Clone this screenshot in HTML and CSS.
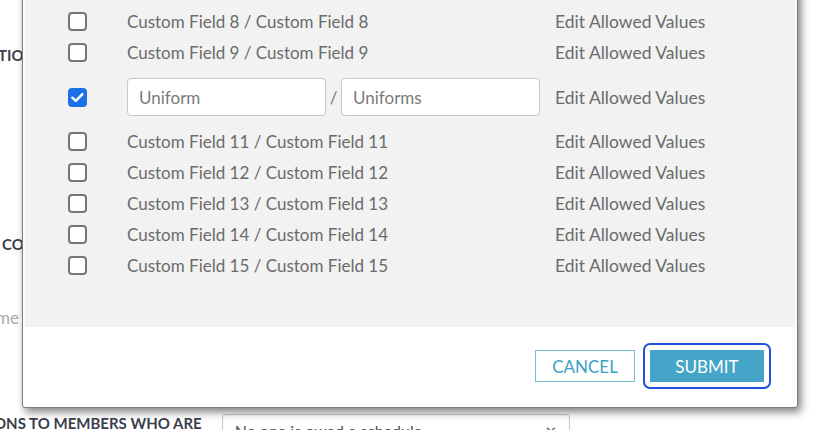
FILE: index.html
```html
<!DOCTYPE html>
<html>
<head>
<meta charset="utf-8">
<link rel="stylesheet" href="styles.css">
</head>
<body>
<div class="page">
  <div class="bg-label bg-tio">TIO</div>
  <div class="bg-label bg-co">CO</div>
  <div class="bg-hint">me</div>
  <div class="bg-row">
    <div class="bg-label bg-ons">ONS TO MEMBERS WHO ARE</div>
    <div class="bg-select"><span class="bg-select-text">No one is owed a schedule</span><span class="bg-x">×</span></div>
  </div>

  <div class="modal">
    <div class="modal-body">
      <div class="row"><span class="cb"></span><span class="lbl">Custom Field 7 / Custom Field 7</span><span class="edit">Edit Allowed Values</span></div>
      <div class="row"><span class="cb"></span><span class="lbl">Custom Field 8 / Custom Field 8</span><span class="edit">Edit Allowed Values</span></div>
      <div class="row"><span class="cb"></span><span class="lbl">Custom Field 9 / Custom Field 9</span><span class="edit">Edit Allowed Values</span></div>
      <div class="row row-edit">
        <span class="cb cb-on"><svg viewBox="0 0 20 20" width="19" height="19"><path d="M4.6 10.2 L8.2 13.6 L15.2 6.4" fill="none" stroke="#fff" stroke-width="2.6" stroke-linecap="round" stroke-linejoin="round"/></svg></span>
        <span class="lbl lbl-inputs"><span class="inp">Uniform</span><span class="slash">/</span><span class="inp">Uniforms</span></span>
        <span class="edit">Edit Allowed Values</span>
      </div>
      <div class="row"><span class="cb"></span><span class="lbl">Custom Field 11 / Custom Field 11</span><span class="edit">Edit Allowed Values</span></div>
      <div class="row"><span class="cb"></span><span class="lbl">Custom Field 12 / Custom Field 12</span><span class="edit">Edit Allowed Values</span></div>
      <div class="row"><span class="cb"></span><span class="lbl">Custom Field 13 / Custom Field 13</span><span class="edit">Edit Allowed Values</span></div>
      <div class="row"><span class="cb"></span><span class="lbl">Custom Field 14 / Custom Field 14</span><span class="edit">Edit Allowed Values</span></div>
      <div class="row"><span class="cb"></span><span class="lbl">Custom Field 15 / Custom Field 15</span><span class="edit">Edit Allowed Values</span></div>
    </div>
    <div class="modal-footer">
      <button class="btn btn-cancel">CANCEL</button>
      <span class="focus-ring"><button class="btn btn-submit">SUBMIT</button></span>
    </div>
  </div>
</div>
</body>
</html>
```
FILE: styles.css
```css
* { box-sizing: border-box; }
html, body { margin: 0; padding: 0; background: #fff; }
body { font-family: "Lato", "Noto Sans", sans-serif; overflow: hidden; }
.page { position: relative; width: 840px; height: 430px; overflow: hidden; }

.bg-label { font-weight: 700; font-size: 15px; color: #3b3f4d; white-space: nowrap; }
.bg-tio { position: absolute; left: -2px; top: 46px; }
.bg-co { position: absolute; left: 2px; top: 235px; }
.bg-hint { position: absolute; left: -4px; top: 307px; font-size: 17px; color: #a9a9a9; }
.bg-row { position: absolute; left: -6px; top: 414px; display: flex; gap: 20px; }
.bg-select { width: 348px; height: 34px; border: 1px solid #c9c9c9; border-radius: 4px; display: flex; justify-content: space-between; padding: 6px 12px; font-size: 16px; color: #555; }
.bg-x { color: #666; font-size: 20px; line-height: 18px; }

.modal {
  position: absolute; left: 22px; top: -28px; width: 776px; height: 436px;
  border: 1px solid #7a7a7a; border-radius: 0 0 3px 3px;
  box-shadow: inset 0 0 0 1px #fff, 3px 4px 8px rgba(0,0,0,0.5);
  background: #fff; padding: 2px;
  display: flex; flex-direction: column;
}
.modal-body { background: #f2f2f2; padding: 0 0 46px 43px; flex: 1; }
.row { display: flex; align-items: center; height: 31px; color: #6b6b6b; font-size: 17px; }
.row-edit { height: 58px; }
.cb { width: 19px; height: 19px; border: 2px solid #767676; border-radius: 4px; background: #fff; flex: none; }
.cb-on { background: #1b72e8; border-color: #1b72e8; display: flex; align-items: center; justify-content: center; }
.cb-on svg { flex: none; }
.lbl { margin-left: 40px; width: 428px; white-space: nowrap; }
.lbl-inputs { display: flex; align-items: center; }
.inp { width: 199px; height: 38px; border: 1px solid #c8c8c8; border-radius: 4px; background: #fff; padding: 0 11px; display: flex; align-items: center; color: #7a7a7a; }
.slash { width: 15px; text-align: center; color: #777; }
.edit { white-space: nowrap; font-size: 17.5px; }

.modal-footer { height: 80px; display: flex; align-items: center; justify-content: flex-end; padding-right: 24px; gap: 8px; }
.btn { font-family: "Lato", sans-serif; font-size: 17px; height: 32px; padding: 0; border-radius: 0; cursor: pointer; }
.btn-cancel { width: 100px; background: #fff; border: 1px solid #76bcd6; color: #3ba0c6; }
.focus-ring { display: inline-flex; padding: 5px 5px; border: 2px solid #2350d8; border-radius: 7px; }
.btn-submit { width: 114px; background: #44a5c8; border: 1px solid #44a5c8; color: #fff; }
```
